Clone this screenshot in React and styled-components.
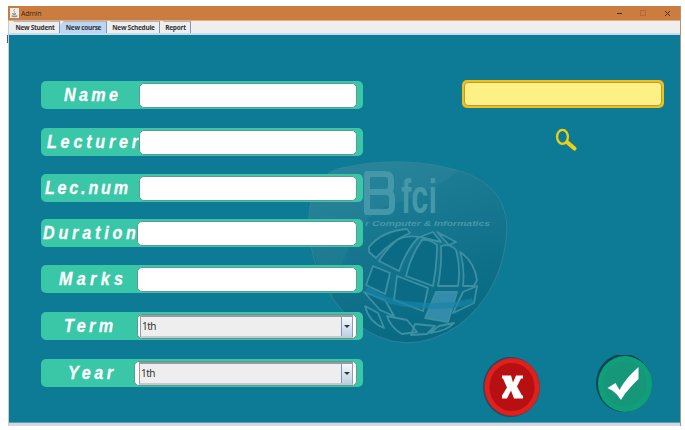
import React from "react";
import styled, { createGlobalStyle } from "styled-components";

const GlobalStyle = createGlobalStyle`
  * { box-sizing: border-box; }
  body { margin: 0; background: #fff; overflow: hidden; }
`;

const Page = styled.div`
  display: flex;
  width: 685px;
  height: 430px;
  padding: 6px 0 0 8px;
  background: linear-gradient(#3d5c91, #3d5c91) 7px 35px / 1px 8px no-repeat, #fff;
  font-family: "Liberation Sans", sans-serif;
`;

const Window = styled.main`
  display: flex;
  flex-direction: column;
  width: 673px;
  height: 420px;
  border-left: 1px solid #c5cbd3;
  border-right: 1px solid #b99276;
  background: #0d7b96;
`;

const TitleBar = styled.header`
  display: flex;
  align-items: center;
  flex: 0 0 15px;
  margin-left: -1px;
  padding: 0 8px 0 2px;
  background: #cb7d40;
  border-bottom: 1px solid #e1ad83;
  color: #462814;
  font: 7px "Open Sans", sans-serif;
`;

const Title = styled.span`
  flex: 1;
  margin-left: 2px;
  letter-spacing: -0.2px;
`;

const Controls = styled.svg`
  width: 56px;
  height: 10px;
`;

const Tabs = styled.nav`
  display: flex;
  flex: 0 0 12px;
  padding-left: 1px;
  background: #eeeeee;
`;

const Tab = styled.div`
  width: ${({ $width }) => $width}px;
  height: 12px;
  border-right: 1px solid #8196b7;
  border-top: 1px solid #a9b7cb;
  background: ${({ $active }) => ($active ? "#bdd6f2" : "#eeeeee")};
  clip-path: polygon(4px 0, 100% 0, 100% 100%, 0 100%, 0 4px);
  color: #30343a;
  font: bold 6.5px/11px "Open Sans", sans-serif;
  letter-spacing: -0.27px;
  padding-left: 1px;
  text-align: center;
  white-space: nowrap;
`;

const Content = styled.section`
  display: flex;
  position: relative;
  flex: 1;
  padding: 46px 0 0 32px;
  border-top: 2px solid #c5dbee;
  border-bottom: 3px solid #d0d9e2;
  box-shadow: inset 0 -1px #6199ae;
  background: #0d7b96;
`;

const Form = styled.form`
  display: grid;
  grid-template-rows: 47px 46px 45px 46px 47px 47px 28px;
  position: relative;
  width: 323px;
  height: 306px;
`;

const Row = styled.div`
  display: flex;
  align-items: center;
  width: 322px;
  height: 28px;
  padding-right: 6px;
  border-radius: 5px;
  background: #3ac7a7;
`;

const LabelArea = styled.label`
  display: flex;
  align-items: center;
  flex: 0 0 ${({ $width }) => $width}px;
  height: 28px;
  padding: 0 0 2px ${({ $inset }) => $inset}px;
`;

const LabelDrawing = styled.svg`
  width: ${({ $width }) => $width}px;
  height: 24px;
  overflow: visible;
  fill: #fff;
  stroke: #fff;
  stroke-width: 0.3px;
  font: italic bold 19px "Liberation Sans", sans-serif;
`;

const Field = styled.div`
  display: flex;
  flex: 1;
  height: 25px;
  overflow: hidden;
  border: 1px solid #5f9b8d;
  border-radius: 5px;
  background: #fff;
`;

const Select = styled.div`
  display: flex;
  align-items: center;
  flex: 1;
  margin: 0 3px 0 ${({ $inset }) => $inset}px;
  padding-left: 1px;
  border: 1px solid #929ba6;
  border-top-width: 2px;
  border-bottom: 2px solid #c2c9d0;
  background: #eee;
  color: #333;
  font: 10px "Noto Sans", sans-serif;
  letter-spacing: -0.5px;
`;

const Arrow = styled.span`
  display: flex;
  align-items: center;
  justify-content: center;
  width: 11px;
  height: 100%;
  margin-left: auto;
  border-left: 1px solid #8095b0;
  background: linear-gradient(#f3f8fd, #bed2e6);
  &::after {
    content: "";
    border-top: 3px solid #353535;
    border-left: 3px solid transparent;
    border-right: 3px solid transparent;
  }
`;

const Sidebar = styled.aside`
  position: relative;
  display: flex;
  flex-direction: column;
  width: 202px;
  margin: -1px 0 0 98px;
`;

const SearchBox = styled.div`
  height: 28px;
  padding: 2px;
  border-radius: 5px;
  background: #f3bf17;
`;

const SearchInput = styled.div`
  height: 24px;
  border: 1px solid #b89c3b;
  border-radius: 4px;
  background: #fdf084;
`;

const SearchIcon = styled.svg`
  width: 26px;
  height: 26px;
  margin: 20px 0 0 91px;
`;

const Actions = styled.div`
  display: flex;
  gap: 53px;
  margin: 201px 0 0 20px;
`;

const ActionIcon = styled.svg`
  flex: 0 0 60px;
  width: 60px;
  height: 64px;
`;

const Watermark = styled.svg`
  position: absolute;
  left: 295px;
  top: 121px;
  width: 210px;
  height: 195px;
`;

const rows = [
  { text: "Name", area: 98, inset: 23, width: 54 },
  { text: "Lecturer", area: 98, inset: 6, width: 91 },
  { text: "Lec.num", area: 98, inset: 4, width: 83 },
  { text: "Duration", area: 96, inset: 2, width: 93 },
  { text: "Marks", area: 96, inset: 18, width: 64 },
  { text: "Term", area: 96, inset: 23, width: 49, select: true, gap: 2 },
  { text: "Year", area: 93, inset: 27, width: 45, select: true, gap: 4 },
];

function JavaIcon() {
  return <svg width="9" height="10" viewBox="0 0 9 10">
    <rect width="9" height="10" fill="#e8edf0" />
    <path d="M5 1C2 3 6 3 4 5M3 6h3M2 8h5" stroke="#d59153" fill="none" />
    <path d="M2 5.5q2 2 4 0M1.5 8q3 1.5 6 0" stroke="#668ba7" fill="none" />
  </svg>;
}

function FacultyMark() {
  return <Watermark viewBox="304 156 210 195">
    <defs>
      <linearGradient id="shield" x2="0.35" y2="1">
        <stop stopColor="#24839a" /><stop offset="1" stopColor="#096a84" />
      </linearGradient>
      <clipPath id="shieldShape"><path d="M337 169Q403 153 463 172Q507 187 507 230Q503 291 459 325Q405 362 354 322Q315 289 309 232Q306 180 337 169Z" /></clipPath>
    </defs>
    <path d="M337 169Q403 153 463 172Q507 187 507 230Q503 291 459 325Q405 362 354 322Q315 289 309 232Q306 180 337 169Z" fill="url(#shield)" stroke="#2e8299" />
    <path d="M305 157H475Q440 190 390 205Q350 218 332 300L304 230Z" fill="#63a5b0" opacity=".1" clipPath="url(#shieldShape)" />
    <path d="M367 174H385Q391 174 391 180V187Q391 192 386 192H367ZM367 192H386Q392 192 392 198V206Q392 212 386 212H367Z" fill="none" stroke="#4598aa" strokeWidth="6" strokeLinejoin="round" />
    <g fill="#4598aa" fontFamily="Liberation Sans" fontWeight="bold">
      <text x="401" y="213" fontSize="49" textLength="36" lengthAdjust="spacingAndGlyphs">fci</text>
      <text x="365" y="226" fontSize="7" fontStyle="italic" textLength="125" lengthAdjust="spacingAndGlyphs">r Computer &amp; Informatics</text>
    </g>
    <g fill="#0b6a84" stroke="#3d90a3" strokeWidth="1.8" strokeLinejoin="round">
      <path d="M369 247Q382 231 407 229L410 233Q391 241 376 258L369 252Z" />
      <path d="M397 240Q407 235 419 237Q406 250 399 271L379 261Q386 249 397 240Z" />
      <path d="M422 240Q430 239 437 245Q437 266 433 286L406 276Q411 255 422 240Z" />
      <path d="M441 246Q450 243 456 250Q461 268 458 286H438Q442 264 441 246Z" />
      <path d="M460 252Q474 261 477 280L474 286H463Q465 267 460 252Z" />
      <path d="M420 237L433 232L441 242ZM437 232L456 242L449 245Z" />
      <path d="M373 266L390 273L385 294L366 285ZM397 276L428 288L423 311L394 300Z" />
      <path d="M436 292H457L448 322L425 318Z" fill="#338cab" />
      <path d="M463 292L477 286L474 303L453 313ZM364 292L385 300L394 316L380 310Z" />
      <path d="M365 306L378 313L384 328Q369 322 365 306ZM387 316L407 320L417 332L402 334Q391 328 387 316ZM415 324L435 326L427 334L411 335ZM439 326L454 323Q447 331 430 333Z" />
    </g>
    <path d="M367 288Q382 303 417 305Q449 308 473 301" fill="none" stroke="#1884a9" strokeWidth="6" opacity=".65" />
  </Watermark>;
}

function CancelIcon() {
  return <ActionIcon viewBox="0 0 60 64">
    <ellipse cx="28.5" cy="32" rx="27.5" ry="30" fill="#183743" opacity=".6" />
    <ellipse cx="30" cy="32" rx="27.7" ry="29" fill="#dc211f" stroke="#a61c20" strokeWidth=".5" />
    <ellipse cx="30" cy="32" rx="22.5" ry="24" fill="#b80f12" />
    <path d="M20 20.5h9l2 7 3-7h7v3h-2l-4 8 5 9h1v3h-9l-3-8-4 8h-5v-3l5-8-4-9h-1Z" fill="#fff" />
  </ActionIcon>;
}

function ConfirmIcon() {
  return <ActionIcon viewBox="0 0 60 64">
    <ellipse cx="28.5" cy="28" rx="27.5" ry="29" fill="#063d4a" opacity=".85" />
    <ellipse cx="30" cy="29" rx="27" ry="28" fill="#10a079" />
    <ellipse cx="30" cy="29" rx="22" ry="23" fill="#179779" />
    <path d="M12.5 33l8-5 4 7c5-9 10-15 18-22l1-1v12c-7 7-13 13-17.5 21-4-6-7-9-13.5-12Z" fill="#fff" />
  </ActionIcon>;
}

export default function App() {
  return <Page>
    <GlobalStyle />
    <Window>
      <TitleBar>
        <JavaIcon /><Title>Admin</Title>
        <Controls viewBox="0 0 56 10" fill="none" strokeWidth="1">
          <path d="M1 5.5h5" stroke="#4c2b17" />
          <rect x="24.5" y="2.5" width="5" height="5" stroke="#b46a36" />
          <path d="M49 3l5 5m0-5l-5 5" stroke="#4c2b17" />
        </Controls>
      </TitleBar>
      <Tabs>
        <Tab $width={50}>New Student</Tab>
        <Tab $width={47} $active>New course</Tab>
        <Tab $width={53}>New Schedule</Tab>
        <Tab $width={31}>Report</Tab>
      </Tabs>
      <Content>
        <FacultyMark />
        <Form>
          {rows.map((row) => <Row key={row.text}>
            <LabelArea $width={row.area} $inset={row.inset}>
              <LabelDrawing $width={row.width}>
                <text x="0" y="19" transform="scale(.85 1)" textLength={row.width / 0.85}>{row.text}</text>
              </LabelDrawing>
            </LabelArea>
            <Field>{row.select && <Select $inset={row.gap}>1th<Arrow /></Select>}</Field>
          </Row>)}
        </Form>
        <Sidebar>
          <SearchBox><SearchInput /></SearchBox>
          <SearchIcon viewBox="0 0 26 26">
            <ellipse cx="9.5" cy="8.8" rx="5.4" ry="7" fill="none" stroke="#f1d014" strokeWidth="2.3" />
            <path d="M14.5 14.5l7 6" stroke="#f1d014" strokeWidth="4.2" strokeLinecap="round" />
          </SearchIcon>
          <Actions><CancelIcon /><ConfirmIcon /></Actions>
        </Sidebar>
      </Content>
    </Window>
  </Page>;
}
